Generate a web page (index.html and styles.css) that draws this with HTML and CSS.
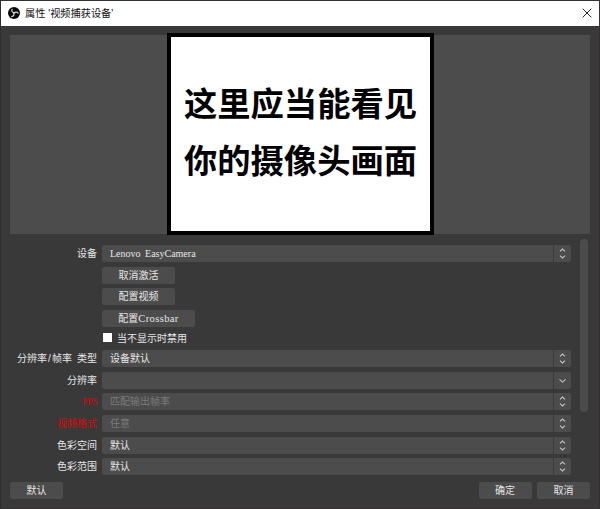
FILE: index.html
```html
<!DOCTYPE html>
<html lang="zh-CN">
<head>
<meta charset="utf-8">
<title>属性 '视频捕获设备'</title>
<link rel="stylesheet" href="styles.css">
</head>
<body>
<svg class="defs" width="0" height="0">
  <symbol id="updown" viewBox="0 0 8 14"><path d="M1.5 4.8 4 2.5l2.5 2.3M1.5 9.2 4 11.5l2.5-2.3"/></symbol>
  <symbol id="down" viewBox="0 0 8 14"><path d="M1 5.8 4 8.6l3-2.8"/></symbol>
</svg>
<div class="window">
  <header class="titlebar">
    <svg class="logo" viewBox="0 0 24 24">
      <circle cx="12" cy="12" r="12" fill="#080808"/>
      <g fill="none" stroke="#dcdcdc" stroke-width="2.3" stroke-linecap="round">
        <path id="blade" d="M12 11.5C8.500 11 6.500 8 8.200 4.500"/>
        <use href="#blade" transform="rotate(120 12 12)"/>
        <use href="#blade" transform="rotate(240 12 12)"/>
      </g>
    </svg>
    <h1 class="title">属性 '视频捕获设备'</h1>
    <svg class="close" viewBox="0 0 10 10"><path d="M.7.7l8.600 8.600M9.300.7.7 9.300"/></svg>
  </header>
  <div class="preview">
    <div class="camera"><p>这里应当能看见</p><p>你的摄像头画面</p></div>
  </div>
  <main class="properties">
    <div class="form">
      <div class="row"><label>设备</label><div class="select"><span class="latin">Lenovo EasyCamera</span><svg><use href="#updown"/></svg></div></div>
      <div class="row"><label></label><button>取消激活</button></div>
      <div class="row"><label></label><button>配置视频</button></div>
      <div class="row"><label></label><button class="wide">配置<span class="latin">Crossbar</span></button></div>
      <div class="row check"><label></label><i class="box"></i><span>当不显示时禁用</span></div>
      <div class="row"><label>分辨率<span class="slash">/</span>帧率<span class="gap"></span>类型</label><div class="select"><span>设备默认</span><svg><use href="#updown"/></svg></div></div>
      <div class="row"><label>分辨率</label><div class="select"><span></span><svg><use href="#down"/></svg></div></div>
      <div class="row"><label class="error fps">FPS</label><div class="select disabled"><span>匹配输出帧率</span><svg><use href="#updown"/></svg></div></div>
      <div class="row"><label class="error">视频格式</label><div class="select disabled"><span>任意</span><svg><use href="#updown"/></svg></div></div>
      <div class="row"><label>色彩空间</label><div class="select"><span>默认</span><svg><use href="#updown"/></svg></div></div>
      <div class="row"><label>色彩范围</label><div class="select"><span>默认</span><svg><use href="#updown"/></svg></div></div>
    </div>
    <div class="scrollbar"></div>
  </main>
  <footer class="actions"><button>默认</button><button class="ok">确定</button><button>取消</button></footer>
</div>
</body>
</html>
```
FILE: styles.css
```css
* { box-sizing: border-box; }
body { margin: 0; overflow: hidden; background: #393939; }
.defs { position: absolute; }
.window {
  width: 600px; height: 509px;
  display: flex; flex-direction: column;
  border: 1px solid #343233; border-left-color: #2e2e2e;
  background: #393939; color: #e6e6e6;
  font: 10px/18px "Liberation Sans", "Noto Sans CJK SC", sans-serif;
}
.titlebar {
  height: 25px; flex: none;
  display: flex; align-items: center;
  padding: 0 7px; background: #fff; color: #111;
}
.logo { width: 12px; height: 12px; margin: -1px 5px 0 0; }
.title { margin: 0; font-size: 10.200px; font-weight: 400; line-height: 24px; flex: 1; }
.close { width: 10px; height: 10px; margin-top: -1px; fill: none; stroke: #222; stroke-width: 1; }
.preview {
  height: 199px; flex: none; margin: 9px 9px 0;
  background: #4c4c4c;
}
.camera {
  width: 267px; height: 202px; margin: -1px 0 0 157px; padding-top: 36px;
  border: 4px solid #000; background: #fff; color: #000;
  font: 700 33.3px/57px "Noto Sans CJK SC", sans-serif;
  text-align: center; position: relative; top: -1px; white-space: nowrap;
}
.camera p { margin: 0; }
.properties { flex: none; height: 237px; display: flex; padding: 4px 11px 0 9px; }
.form { width: 561px; padding-top: 7px; }
.row { height: 21.6px; display: flex; align-items: flex-start; }
.row.check { height: 18.800px; }
label { width: 87px; margin-right: 5px; text-align: right; white-space: pre; }
.latin { font-family: "Liberation Serif", serif; font-size: 10px; letter-spacing: 0; word-spacing: 2px; }
.wide .latin { font-size: 10.500px; letter-spacing: .4px; }
.fps { font-family: "Liberation Serif", serif; letter-spacing: -.7px; }
.slash { display: inline-block; width: 5px; text-align: center; }
.gap { display: inline-block; width: 5px; }
.select {
  width: 469px; height: 17px; display: flex; justify-content: space-between;
  padding-left: 8px; border-radius: 2px; background: #4c4c4c;
}
.select svg {
  width: 18px; height: 17px; padding: 1.500px 4px; border-left: 1px solid #3a3a3a;
  fill: none; stroke: #c4c4c4; stroke-width: 1.1;
}
.disabled { color: #7b7b7b; }
.error { color: #d40b0b; }
button {
  width: 73px; height: 17px; padding: 0; border: 0; border-radius: 2px;
  background: #4c4c4c; color: inherit; font: inherit;
}
.wide { width: 93px; }
.box { width: 9px; height: 9px; margin: 2px 5px 0 1px; background: #fff; }
.check span { margin-top: -1.500px; }
.scrollbar { width: 8px; height: 173px; margin: 1px 0 0 9px; border-radius: 4px; background: #4c4c4c; }
.actions { display: flex; gap: 5.500px; padding: 11px 9px 0; }
.actions button { width: 53px; }
.ok { margin-left: auto; }
```
